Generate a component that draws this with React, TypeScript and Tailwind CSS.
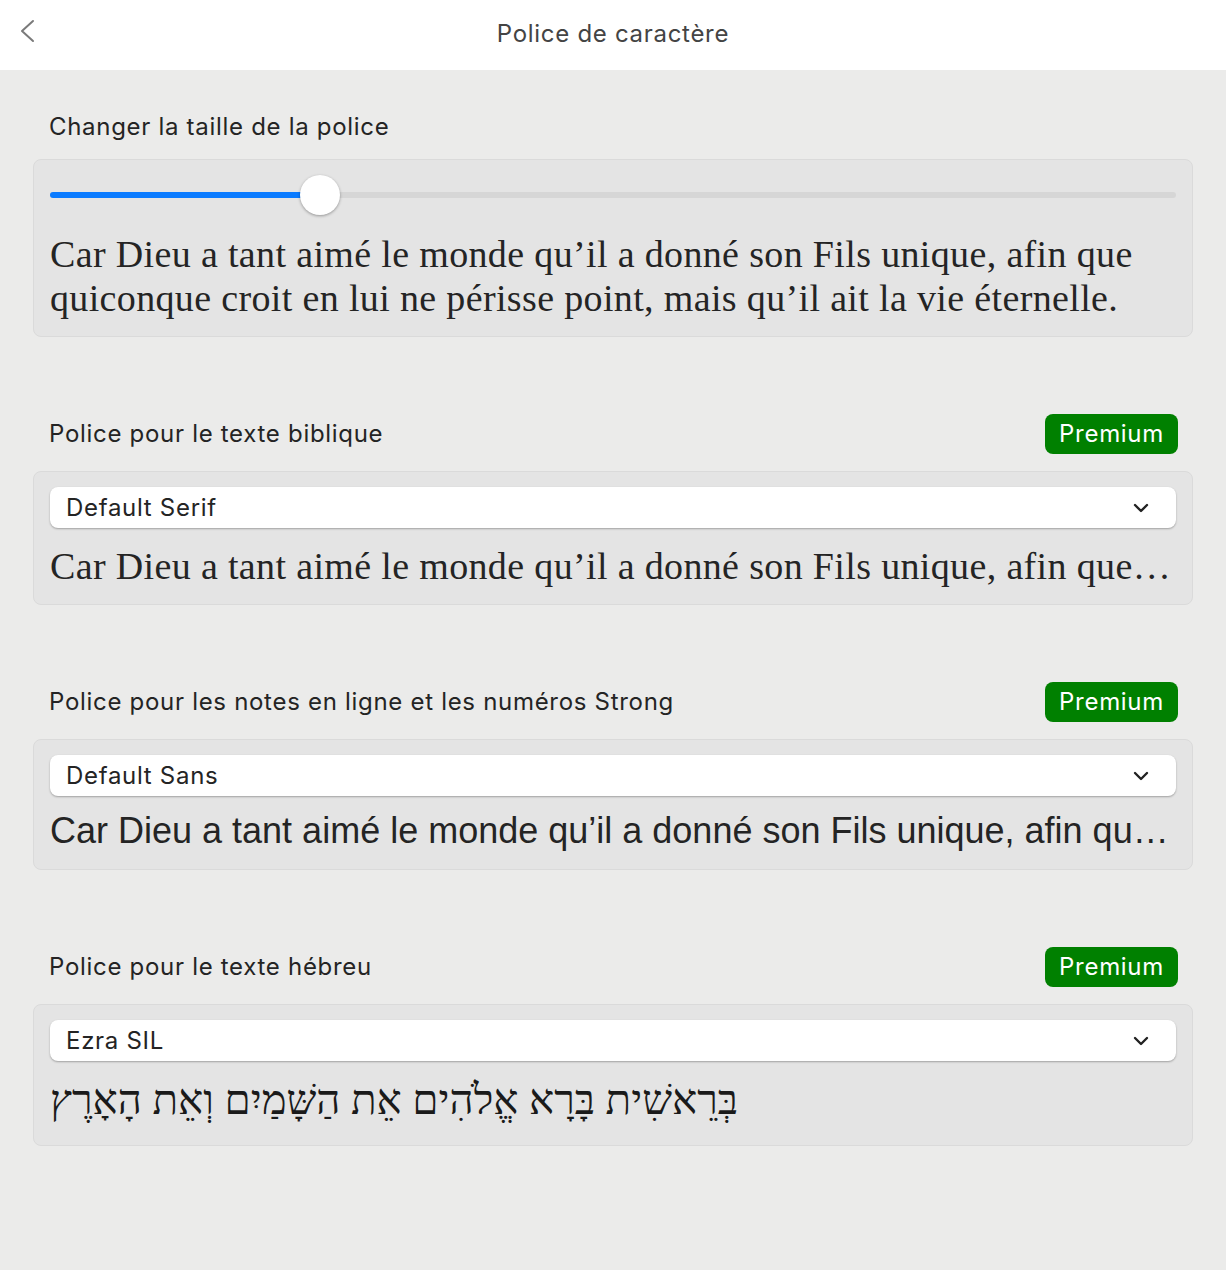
import React from 'react'

const SAMPLE =
  'Car Dieu a tant aimé le monde qu’il a donné son Fils unique, afin que quiconque croit en lui ne périsse point, mais qu’il ait la vie éternelle.'

const HEBREW = 'בְּרֵאשִׁית בָּרָא אֱלֹהִים אֵת הַשָּׁמַיִם וְאֵת הָאָרֶץ'

export default function App() {
  return (
    <div className="min-h-[1270px] bg-[#ebebea] font-['Inter',sans-serif] text-[#242424]">
      {/* Header */}
      <div className="relative flex h-[70px] items-center justify-center bg-white">
        <button className="absolute left-[18px] top-[18px] text-[#7a7a7a]">
          <svg width="20" height="26" viewBox="0 0 20 26" fill="none">
            <polyline points="15,3 4,13 15,23" stroke="currentColor" strokeWidth="2" strokeLinecap="round" strokeLinejoin="round" />
          </svg>
        </button>
        <h1 className="-mt-[2px] text-[24px] tracking-[0.7px] text-[#444]">Police de caractère</h1>
      </div>

      <div className="px-[33px]">
        {/* Font size */}
        <div className="mt-[37px] mb-[12px] flex h-[40px] items-center px-[16px] text-[24px] tracking-[0.7px]">
          Changer la taille de la police
        </div>
        <Card>
          <div className="relative flex h-[40px] items-center">
            <div className="h-[6px] w-full rounded-full bg-[#d6d6d6]" />
            <div className="absolute left-0 top-[17px] h-[6px] w-[270px] rounded-full bg-[#0a7bff]" />
            <div className="absolute left-[250px] top-0 h-[40px] w-[40px] rounded-full bg-white shadow-[0_1px_3px_rgba(0,0,0,0.35)]" />
          </div>
          <p className="mt-[17px] font-['Liberation_Serif',serif] text-[38px] leading-[44px] tracking-[0.35px]">{SAMPLE}</p>
        </Card>

        <Section title="Police pour le texte biblique" value="Default Serif">
          <p className="mt-[16px] truncate font-['Liberation_Serif',serif] text-[38px] leading-[44px] tracking-[0.35px]">{SAMPLE}</p>
        </Section>

        <Section title="Police pour les notes en ligne et les numéros Strong" value="Default Sans">
          <p className="mt-[13px] truncate font-['Liberation_Sans',sans-serif] text-[36px] leading-[44px]">{SAMPLE}</p>
        </Section>

        <Section title="Police pour le texte hébreu" value="Ezra SIL">
          <div className="mt-[10px] flex">
            <p dir="rtl" className="font-['Liberation_Serif','DejaVu_Sans',serif] text-[42px] leading-[58px] text-[#1a1a1a]">
              {HEBREW}
            </p>
          </div>
        </Section>
      </div>
    </div>
  )
}

function Card({ children }: { children: React.ReactNode }) {
  return (
    <div className="rounded-[8px] border border-[#dadada] bg-[#e4e4e4] px-[16px] pt-[15px] pb-[16px]">{children}</div>
  )
}

function Section({ title, value, children }: { title: string; value: string; children: React.ReactNode }) {
  return (
    <div className="mt-[77px]">
      <div className="mb-[17px] flex h-[40px] items-center justify-between pl-[16px] pr-[15px] tracking-[0.7px]">
        <span className="text-[24px]">{title}</span>
        <span className="flex h-[40px] items-center rounded-[8px] bg-[#008000] px-[14px] text-[24px] text-white">Premium</span>
      </div>
      <Card>
        <div className="flex h-[41px] items-center justify-between rounded-[8px] bg-white pl-[16px] pr-[27px] text-[24px] tracking-[0.7px] shadow-[0_1px_2px_rgba(0,0,0,0.3)]">
          <span>{value}</span>
          <svg width="16" height="10" viewBox="0 0 16 10" fill="none">
            <polyline points="2,2 8,8 14,2" stroke="#222" strokeWidth="2.4" strokeLinecap="round" strokeLinejoin="round" />
          </svg>
        </div>
        {children}
      </Card>
    </div>
  )
}
